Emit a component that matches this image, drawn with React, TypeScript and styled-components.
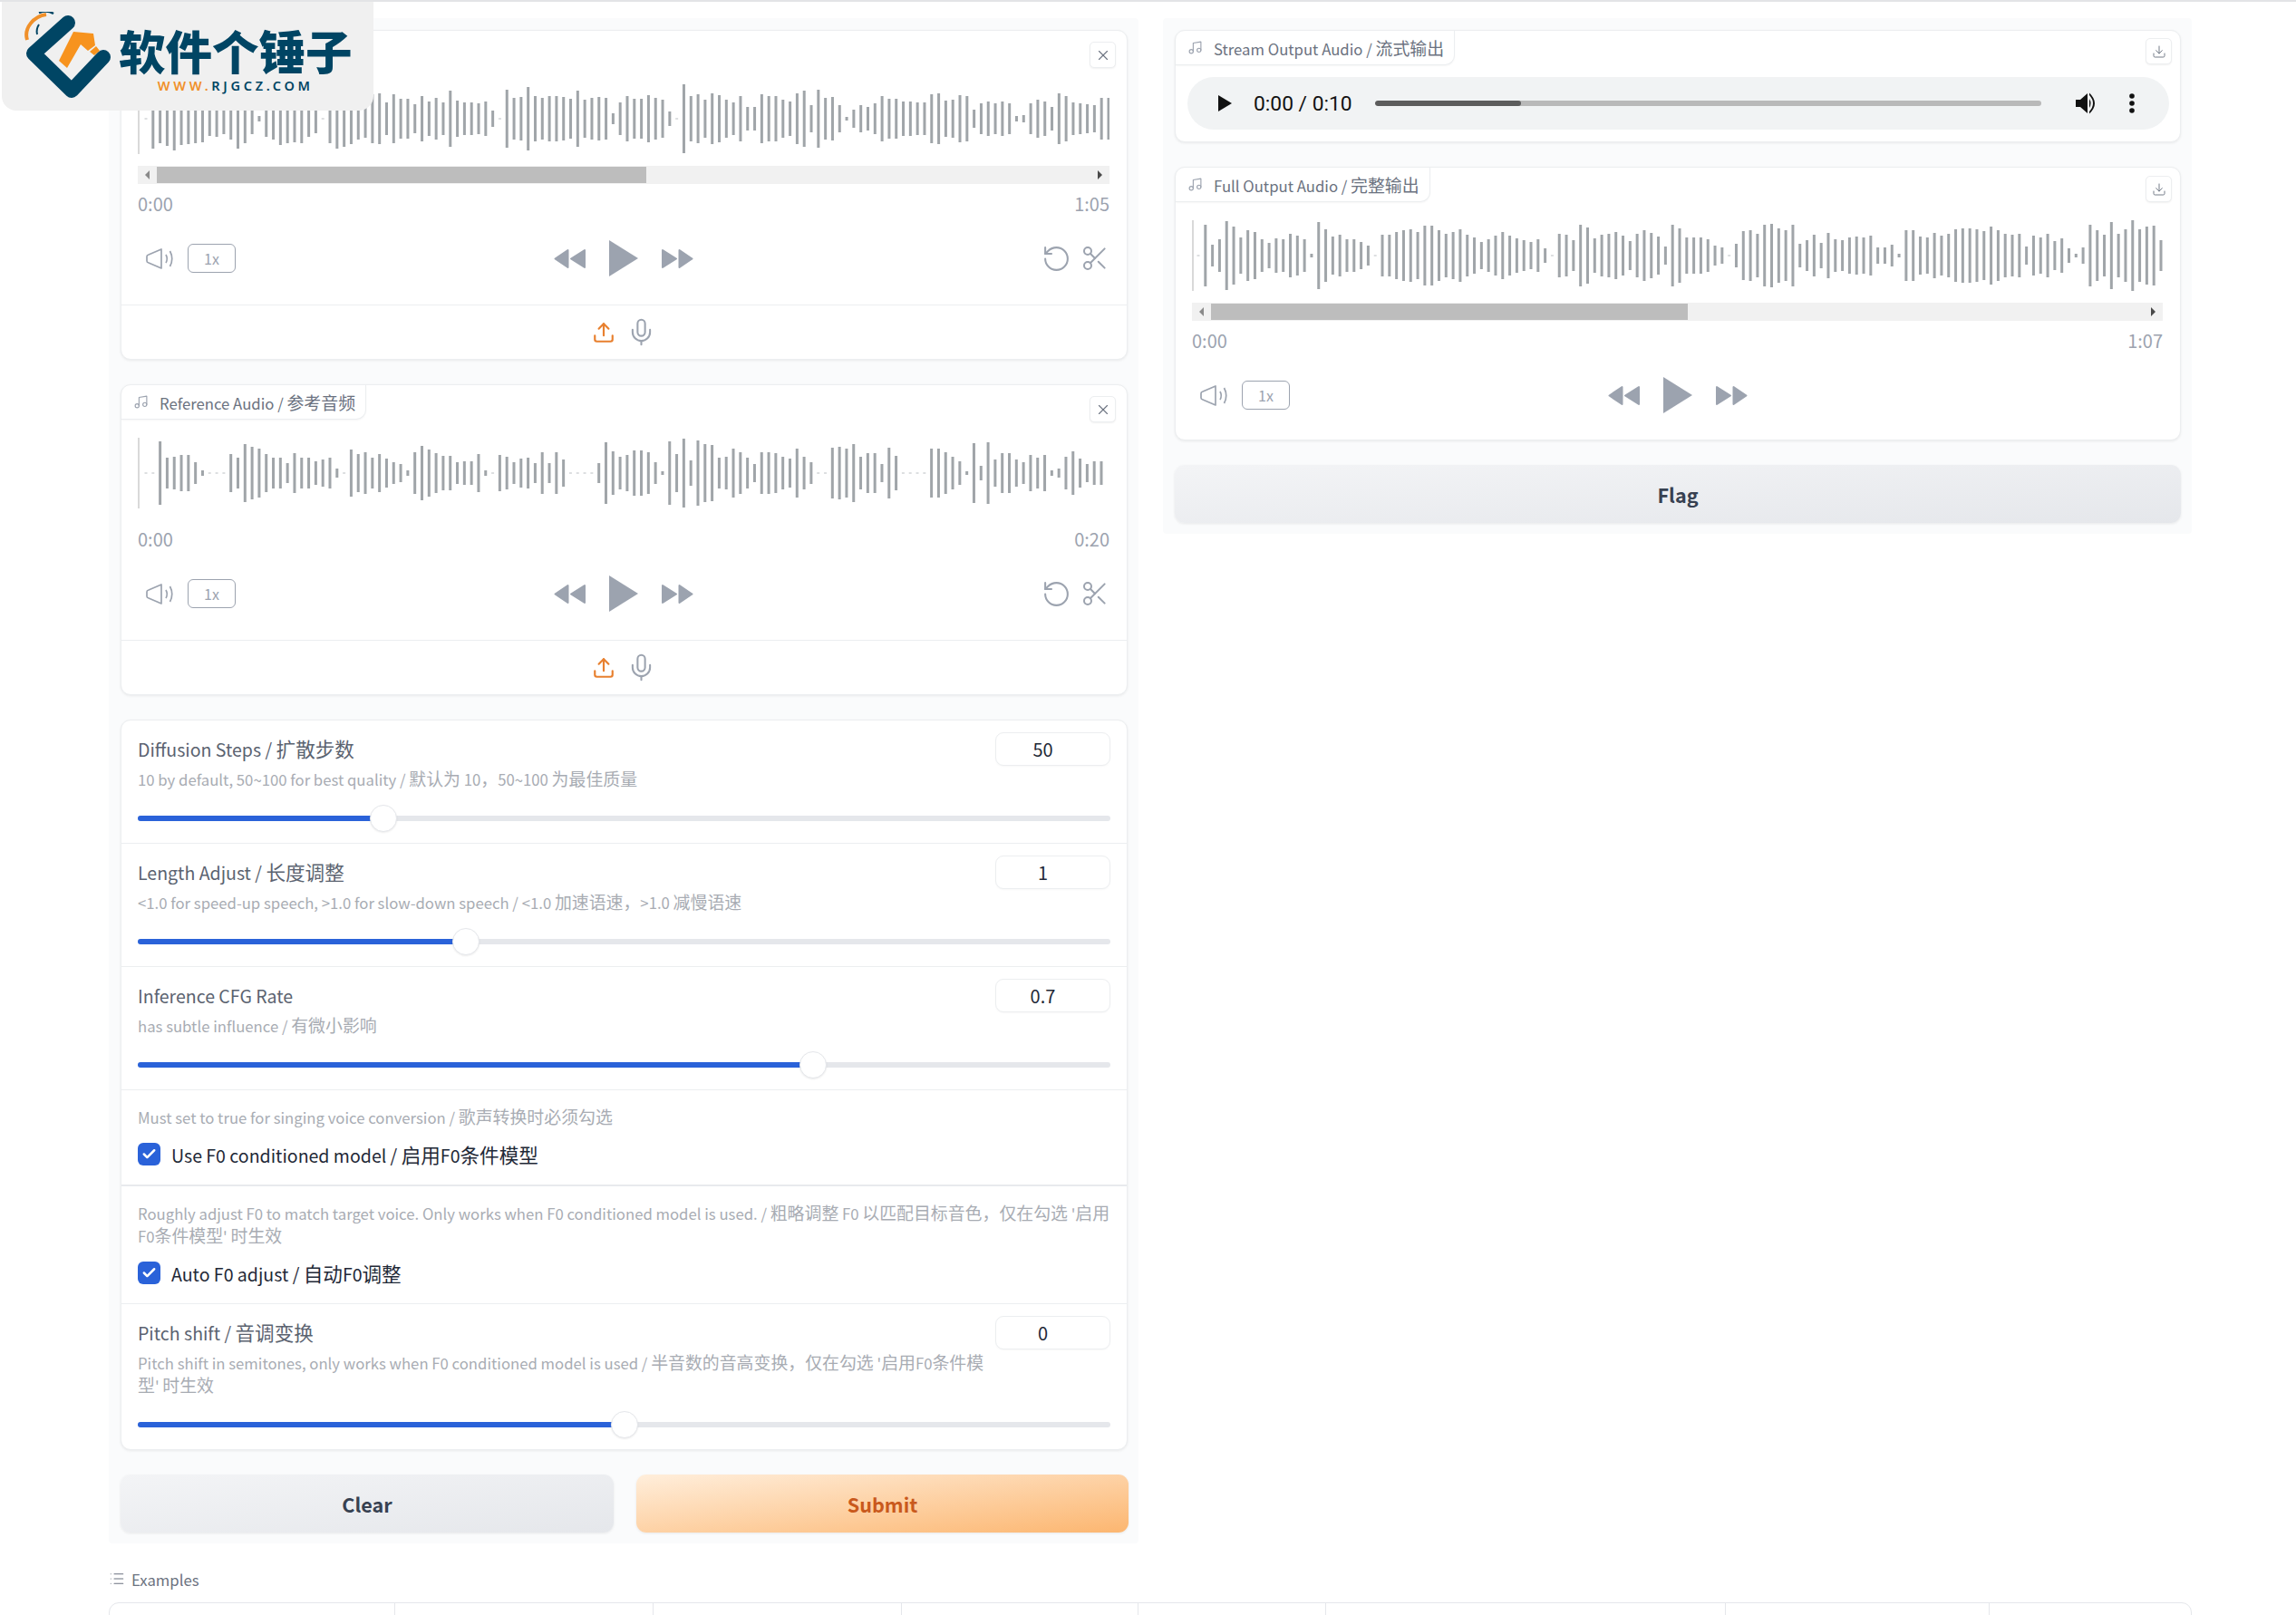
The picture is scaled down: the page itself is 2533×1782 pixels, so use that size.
import React from "react";
import styled, { createGlobalStyle } from "styled-components";
import { Check, Download, List, Mic, Music, RotateCcw, Scissors, Upload, X } from "lucide-react";

const SOURCE_WAVE = [
  1, 33, 27, 30, 35, 29, 28, 27, 26, 19, 20, 17, 23, 33, 27, 17, 3, 20, 23, 29, 27, 26, 27, 20, 16, 1, 27, 33, 31, 28, 23,
  21, 27, 28, 18, 27, 22, 22, 16, 25, 19, 23, 18, 31, 20, 18, 18, 17, 19, 9, 1, 32, 23, 24, 35, 25, 23, 25, 25, 24, 22, 31,
  21, 23, 24, 23, 6, 18, 25, 22, 22, 26, 23, 21, 8, 1, 38, 25, 27, 21, 28, 26, 21, 18, 25, 13, 13, 27, 25, 25, 21, 19, 28,
  31, 15, 32, 23, 24, 15, 2, 10, 15, 13, 17, 25, 22, 22, 19, 19, 18, 18, 27, 28, 20, 21, 26, 25, 10, 17, 19, 17, 19, 17, 3,
  4, 17, 21, 19, 13, 28, 25, 18, 17, 16, 15, 23, 23,
];
const REFERENCE_WAVE = [
  1, 1, 35, 17, 18, 20, 20, 12, 3, 1, 1, 1, 21, 17, 32, 29, 27, 21, 17, 17, 11, 22, 17, 17, 13, 15, 17, 5, 1, 26, 21, 23,
  17, 21, 16, 12, 10, 3, 23, 30, 26, 22, 19, 19, 12, 13, 13, 21, 3, 1, 20, 18, 12, 16, 17, 11, 23, 11, 23, 15, 1, 1, 1, 1,
  11, 34, 24, 18, 20, 25, 25, 23, 12, 2, 35, 21, 38, 14, 36, 32, 31, 17, 18, 27, 23, 17, 10, 23, 23, 22, 18, 16, 27, 18,
  12, 1, 1, 28, 29, 27, 32, 18, 22, 22, 10, 28, 19, 1, 1, 1, 1, 27, 27, 23, 18, 13, 2, 33, 8, 34, 15, 22, 22, 15, 12, 20,
  17, 20, 3, 5, 18, 24, 16, 10, 13, 13,
];
const FULL_WAVE = [
  1, 34, 12, 18, 38, 32, 20, 28, 26, 18, 14, 19, 18, 24, 22, 18, 2, 37, 29, 21, 23, 18, 18, 15, 11, 1, 23, 23, 26, 28, 29,
  26, 33, 33, 28, 24, 26, 29, 23, 20, 15, 18, 22, 26, 22, 19, 17, 15, 18, 8, 1, 24, 23, 17, 34, 31, 19, 23, 24, 26, 22, 16,
  24, 28, 25, 21, 10, 34, 30, 20, 20, 20, 18, 11, 9, 1, 13, 27, 28, 24, 34, 35, 30, 28, 34, 13, 17, 23, 14, 25, 18, 17, 20,
  21, 20, 22, 9, 9, 12, 2, 28, 28, 21, 20, 25, 22, 24, 29, 30, 30, 29, 27, 32, 28, 24, 23, 24, 10, 22, 20, 24, 16, 19, 8,
  2, 9, 34, 28, 23, 37, 24, 29, 39, 29, 32, 33, 17,
];

const GlobalStyle = createGlobalStyle`
  html, body {
    margin: 0;
    height: 1782px;
    overflow: hidden;
    background: #fff;
  }
  body {
    font-family: "Noto Sans CJK SC", "Noto Sans", sans-serif;
    color: #374151;
    border-top: 2px solid #e3e4e6;
    box-sizing: border-box;
  }
  * {
    box-sizing: border-box;
  }
`;

// the latin glyphs of the CJK font run large, so latin runs get a smaller size
const LatinRun = styled.span`
  font-size: 0.885em;
  line-height: 0;
`;

const Page = styled.div`
  position: relative;
  padding: 18px 115px 0 120px;
`;

const LogoBadge = styled.div`
  position: absolute;
  left: 2px;
  top: -2px;
  z-index: 5;
  width: 410px;
  height: 122px;
  display: flex;
  padding: 13px 0 0 25px;
  gap: 9px;
  background: #f0f0f0;
  border-radius: 4px 4px 16px 16px;
`;
const LogoText = styled.div`
  display: flex;
  flex-direction: column;
  align-items: center;
`;
const LogoTitle = styled.div`
  margin-top: 14px;
  font-size: 51.5px;
  line-height: 56px;
  font-weight: 900;
  color: #004564;
  white-space: nowrap;
`;
const LogoUrl = styled.div`
  margin-top: 3px;
  font-family: "Noto Sans", sans-serif;
  font-size: 14.5px;
  line-height: 16px;
  font-weight: 600;
  letter-spacing: 3.7px;
  color: #004564;
  span {
    color: #f0902a;
  }
`;

const Columns = styled.div`
  display: grid;
  grid-template-columns: 1136px 1135px;
  gap: 27px;
  align-items: start;
`;
const Panel = styled.div`
  display: flex;
  flex-direction: column;
  gap: 27px;
  padding: 13px 12px 12px 13px;
  background: #fafbfc;
  border-radius: 4px;
`;

const Card = styled.div`
  background: #fff;
  border: 1px solid #eceef0;
  border-radius: 11px;
  box-shadow: 0 1px 3px rgba(0, 0, 0, 0.07);
`;
const CardHeader = styled.div`
  display: flex;
  justify-content: space-between;
  align-items: flex-start;
  height: 38px;
`;
const LabelTab = styled.div`
  display: flex;
  align-items: center;
  gap: 12px;
  height: 38px;
  padding: 0 11px 0 13px;
  font-size: 18.9px;
  line-height: 25px;
  color: #6b7280;
  border-right: 1px solid #eceef0;
  border-bottom: 1px solid #eceef0;
  border-radius: 11px 0 11px 0;
  box-shadow: 0 1px 2px rgba(0, 0, 0, 0.04);
  white-space: nowrap;
`;
const IconButton = styled.button<{ $top: number; $right: number }>`
  display: flex;
  align-items: center;
  justify-content: center;
  width: 29px;
  height: 29px;
  margin: ${(p) => p.$top}px ${(p) => p.$right}px 0 auto;
  padding: 0;
  background: #fff;
  border: 1px solid #eceef0;
  border-radius: 5px;
  box-shadow: 0 1px 2px rgba(0, 0, 0, 0.06);
  color: #6b7280;
`;

const AudioBody = styled.div`
  padding: 20px 19px 0 18px;
`;
const WaveSvg = styled.svg`
  display: block;
  width: 100%;
  height: 78px;
`;
const ScrollTrack = styled.div`
  display: flex;
  align-items: center;
  height: 20px;
  margin-top: 13px;
  padding: 1px 0;
  background: #f1f1f1;
`;
const ScrollArrow = styled.div<{ $side: "left" | "right" }>`
  flex: none;
  width: 21px;
  display: flex;
  justify-content: center;
  margin-left: ${(p) => (p.$side === "right" ? "auto" : "0")};
  &::before {
    content: "";
    border-top: 5px solid transparent;
    border-bottom: 5px solid transparent;
    border-right: ${(p) => (p.$side === "left" ? "5px solid #8a8a8a" : "0")};
    border-left: ${(p) => (p.$side === "right" ? "5px solid #4a4a4a" : "0")};
  }
`;
const ScrollThumb = styled.div<{ $width: number }>`
  width: ${(p) => p.$width}%;
  height: 100%;
  background: #bdbdbd;
`;
const TimeRow = styled.div<{ $scrolled: boolean }>`
  display: flex;
  justify-content: space-between;
  margin-top: ${(p) => (p.$scrolled ? 11 : 23)}px;
  font-size: 20px;
  line-height: 22px;
  color: #9ca3af;
`;
const Controls = styled.div<{ $tail: number }>`
  display: grid;
  grid-template-columns: 1fr auto 1fr;
  align-items: center;
  height: 40px;
  margin: 29px 0 ${(p) => p.$tail}px;
`;
const ControlGroup = styled.div<{ $end?: boolean; $gap: number; $inset?: number }>`
  display: flex;
  align-items: center;
  gap: ${(p) => p.$gap}px;
  justify-content: ${(p) => (p.$end ? "flex-end" : "flex-start")};
  padding: 0 ${(p) => (p.$end ? p.$inset ?? 0 : 0)}px 0 ${(p) => (p.$end ? 0 : p.$inset ?? 0)}px;
`;
const RateBox = styled.div`
  display: flex;
  align-items: center;
  justify-content: center;
  width: 53px;
  height: 32px;
  border: 1px solid #9ca3af;
  border-radius: 6px;
  font-size: 16px;
  color: #9ca3af;
`;
const ActionRow = styled.div`
  display: flex;
  align-items: center;
  justify-content: center;
  gap: 12px;
  height: 60px;
  border-top: 1px solid #eceef0;
`;

const StreamCard = styled(Card)`
  padding-bottom: 13px;
`;
const Player = styled.div`
  display: flex;
  align-items: center;
  height: 58px;
  margin: 13px 12px 0 13px;
  padding: 0 38px 0 34px;
  background: #f1f3f4;
  border-radius: 29px;
`;
const PlayerTime = styled.div`
  margin-left: 24px;
  font-family: Roboto, sans-serif;
  font-size: 22.8px;
  color: #111;
  white-space: nowrap;
`;
const PlayerTrack = styled.div`
  flex: 1;
  height: 6px;
  margin: 0 38px 0 25px;
  background: #b9b9b9;
  border-radius: 3px;
  overflow: hidden;
`;
const PlayerFill = styled.div<{ $width: number }>`
  width: ${(p) => p.$width}%;
  height: 100%;
  background: #5c5c5c;
  border-radius: 3px;
`;
const PlayerDots = styled.svg`
  margin-left: 35px;
`;

const SettingsCard = styled(Card)`
  display: flex;
  flex-direction: column;
`;
const SettingRow = styled.div<{ $top?: number; $last?: boolean; $thick?: boolean }>`
  padding: ${(p) => p.$top ?? 18}px 18px 12px 18px;
  border-bottom: ${(p) => (p.$last ? "0" : p.$thick ? "2px solid #e8eaed" : "1px solid #eceef0")};
`;
const SettingHead = styled.div`
  display: flex;
  align-items: flex-start;
  gap: 10px;
`;
const SettingText = styled.div`
  flex: 1;
  min-width: 0;
`;
const SettingLabel = styled.div`
  font-size: 21.6px;
  line-height: 26px;
  color: #5b6370;
  white-space: nowrap;
  ${LatinRun} {
    font-size: 0.905em;
  }
`;
const SettingInfo = styled.div<{ $gap?: number }>`
  margin-top: ${(p) => p.$gap ?? 7}px;
  font-size: 18.9px;
  line-height: 25px;
  color: #a8acb3;
`;
const NumberField = styled.input`
  flex: none;
  width: 127px;
  height: 37px;
  margin-top: -5px;
  padding: 0 22px 0 0;
  text-align: center;
  font-family: inherit;
  font-size: 20px;
  color: #1f2937;
  background: #fff;
  border: 1px solid #eceef0;
  border-radius: 9px;
  box-shadow: 0 1px 2px rgba(0, 0, 0, 0.03);
  outline: none;
`;
const SliderWrap = styled.div`
  position: relative;
  height: 30px;
  margin-top: 17px;
`;
const SliderTrack = styled.div`
  position: absolute;
  left: 0;
  right: 0;
  top: 12px;
  height: 6px;
  background: #e5e7eb;
  border-radius: 3px;
`;
const SliderFill = styled.div<{ $pct: number }>`
  position: absolute;
  left: 0;
  top: 12px;
  width: ${(p) => p.$pct}%;
  height: 6px;
  background: #2a62d9;
  border-radius: 3px 0 0 3px;
`;
const SliderThumb = styled.div<{ $pct: number }>`
  position: absolute;
  left: ${(p) => p.$pct}%;
  top: 0;
  width: 30px;
  height: 30px;
  margin-left: -15px;
  background: #fff;
  border: 1px solid #e5e7eb;
  border-radius: 50%;
  box-shadow: 0 1px 2px rgba(0, 0, 0, 0.08);
`;
const CheckRow = styled.div`
  display: flex;
  align-items: center;
  gap: 12px;
  height: 25px;
  margin: 17px 0 9px;
  font-size: 21.6px;
  line-height: 25px;
  color: #1f2937;
  ${LatinRun} {
    font-size: 0.905em;
  }
`;
const CheckBox = styled.div`
  display: flex;
  align-items: center;
  justify-content: center;
  width: 25px;
  height: 25px;
  background: #2a62d9;
  border-radius: 6px;
  color: #fff;
`;

const ButtonRow = styled.div`
  display: grid;
  grid-template-columns: 544px 543px;
  gap: 25px;
`;
const ActionButton = styled.button<{ $primary?: boolean }>`
  height: 64px;
  border: 0;
  border-radius: 11px;
  font-family: inherit;
  font-size: 21.6px;
  font-weight: 600;
  color: ${(p) => (p.$primary ? "#c9591c" : "#374151")};
  background: ${(p) =>
    p.$primary
      ? "linear-gradient(to bottom right, #ffeedb, #fcb670)"
      : "linear-gradient(to bottom right, #f3f4f6, #e5e7eb)"};
  box-shadow: 0 1px 3px rgba(0, 0, 0, 0.08);
`;

const ExamplesLabel = styled.div`
  display: flex;
  align-items: center;
  gap: 7px;
  height: 24px;
  margin-top: 27px;
  font-size: 18.9px;
  line-height: 24px;
  color: #6b7280;
`;
const ExamplesTable = styled.div`
  display: grid;
  grid-template-columns: 315px 285px 274px 261px 207px 441px 291px 224px;
  width: 2298px;
  height: 60px;
  margin-top: 14px;
  border: 1px solid #e5e7eb;
  border-radius: 11px 11px 0 0;
`;
const ExamplesCell = styled.div`
  border-right: 1px solid #e5e7eb;
  &:last-child {
    border-right: 0;
  }
`;

const Mixed = ({ text }: { text: string }) => (
  <span>
    {text.split(/([\x00-\x7F]+)/).map((part, i) => (i % 2 ? <LatinRun key={i}>{part}</LatinRun> : part))}
  </span>
);

function Wave({ data, start, end }: { data: number[]; start: number; end: number }) {
  const step = (end - start) / (data.length - 1);
  return (
    <WaveSvg viewBox="0 0 1072 78" preserveAspectRatio="none">
      <rect x="0" y="0" width="2" height="78" fill="#d9d9d9" />
      {data.map((half, i) => (
        <rect
          key={i}
          x={start + i * step - 1.5}
          y={half <= 1 ? 38.5 : 39 - half}
          width="3"
          height={half <= 1 ? 1 : half * 2}
          fill={half <= 1 ? "#bcc0c4" : "#a0a5a9"}
        />
      ))}
    </WaveSvg>
  );
}

const SpeakerIcon = () => (
  <svg width="31" height="23" viewBox="0 0 31 23" fill="none" stroke="#9ca3af" strokeWidth="1.7">
    <path d="M3 7 L17 1 V22 L3 16 Q1 15.5 1 14 V9 Q1 7.5 3 7 Z" strokeLinejoin="round" />
    <path d="M22 7 Q24.5 11.5 22 16" />
    <path d="M26.5 3 Q31 11.5 26.5 20" />
  </svg>
);
const SkipIcon = ({ flip }: { flip?: boolean }) => (
  <svg
    width="35"
    height="23"
    viewBox="0 0 35 23"
    fill="#9ca3af"
    stroke="#9ca3af"
    strokeWidth="2"
    strokeLinejoin="round"
    transform={flip ? "scale(-1 1)" : undefined}
  >
    <path d="M1.5 11.5 L15.5 2 V21 Z M19 11.5 L34 2 V21 Z" />
  </svg>
);
const PlayIcon = () => (
  <svg width="32" height="40" viewBox="0 0 32 40" fill="#9ca3af">
    <path d="M0 0 L32 20 L0 40 Z" />
  </svg>
);

function AudioControls({ editable, tail }: { editable?: boolean; tail: number }) {
  return (
    <Controls $tail={tail}>
      <ControlGroup $gap={15} $inset={9}>
        <SpeakerIcon />
        <RateBox>1x</RateBox>
      </ControlGroup>
      <ControlGroup $gap={26}>
        <SkipIcon />
        <PlayIcon />
        <SkipIcon flip />
      </ControlGroup>
      <ControlGroup $end $gap={10} $inset={0}>
        {editable && (
          <>
            <RotateCcw size={33} strokeWidth={1.5} color="#9ca3af" />
            <Scissors size={32} strokeWidth={1.5} color="#9ca3af" />
          </>
        )}
      </ControlGroup>
    </Controls>
  );
}

const MusicTab = ({ label }: { label: string }) => (
  <LabelTab>
    <Music size={17} strokeWidth={1.6} color="#9ca3af" />
    <Mixed text={label} />
  </LabelTab>
);

function InputAudio(props: { label?: string; data: number[]; end: number; total: string; thumb?: number }) {
  return (
    <Card>
      <CardHeader>
        {props.label && <MusicTab label={props.label} />}
        <IconButton $top={12} $right={12}>
          <X size={18} strokeWidth={1.5} />
        </IconButton>
      </CardHeader>
      <AudioBody>
        <Wave data={props.data} start={9} end={props.end} />
        {props.thumb && (
          <ScrollTrack>
            <ScrollArrow $side="left" />
            <ScrollThumb $width={props.thumb} />
            <ScrollArrow $side="right" />
          </ScrollTrack>
        )}
        <TimeRow $scrolled={!!props.thumb}>
          <span>0:00</span>
          <span>{props.total}</span>
        </TimeRow>
        <AudioControls editable tail={31} />
      </AudioBody>
      <ActionRow>
        <Upload size={26} strokeWidth={2} color="#e8802f" />
        <Mic size={33} strokeWidth={1.5} color="#9ca3af" />
      </ActionRow>
    </Card>
  );
}

function SliderSetting(props: { label: string; info: string; value: string; pct: number; last?: boolean }) {
  return (
    <SettingRow $last={props.last}>
      <SettingHead>
        <SettingText>
          <SettingLabel>
            <Mixed text={props.label} />
          </SettingLabel>
          <SettingInfo>
            <Mixed text={props.info} />
          </SettingInfo>
        </SettingText>
        <NumberField readOnly value={props.value} />
      </SettingHead>
      <SliderWrap>
        <SliderTrack />
        <SliderFill $pct={props.pct} />
        <SliderThumb $pct={props.pct} />
      </SliderWrap>
    </SettingRow>
  );
}

function CheckSetting(props: { info: string; label: string; thick?: boolean }) {
  return (
    <SettingRow $top={16} $thick={props.thick}>
      <SettingInfo $gap={0}>
        <Mixed text={props.info} />
      </SettingInfo>
      <CheckRow>
        <CheckBox>
          <Check size={17} strokeWidth={3.5} />
        </CheckBox>
        <Mixed text={props.label} />
      </CheckRow>
    </SettingRow>
  );
}

const LogoMark = () => (
  <svg width="95" height="96" viewBox="0 0 95 96" fill="none">
    <path d="M3 31 C-1 18 10 5 24 3" stroke="#f0902a" strokeWidth="4" />
    <path d="M16 1 C21 -1 27 -1 32 2" stroke="#004564" strokeWidth="2.5" />
    <path d="M14 25 C13 21 14 17 16 14" stroke="#004564" strokeWidth="2" />
    <path d="M48 12 L10 46 L52 87 L87 50" stroke="#004564" strokeWidth="16" strokeLinejoin="round" strokeLinecap="round" />
    <path d="M38 54 L54 22 L76 24 L78 37 L70 43 L62 36 L47 62 Z" fill="#f7931e" />
    <path d="M72 44 L79 38 L83 43 L77 48 Z" fill="#f7931e" />
  </svg>
);

export default function App() {
  return (
    <>
      <GlobalStyle />
      <Page>
        <LogoBadge>
          <LogoMark />
          <LogoText>
            <LogoTitle>软件个锤子</LogoTitle>
            <LogoUrl>
              <span>WWW.</span>RJGCZ.COM
            </LogoUrl>
          </LogoText>
        </LogoBadge>
        <Columns>
          <Panel>
            <InputAudio data={SOURCE_WAVE} end={1071} total="1:05" thumb={50.4} />
            <InputAudio label="Reference Audio / 参考音频" data={REFERENCE_WAVE} end={1063} total="0:20" />
            <SettingsCard>
              <SliderSetting
                label="Diffusion Steps / 扩散步数"
                info="10 by default, 50~100 for best quality / 默认为 10，50~100 为最佳质量"
                value="50"
                pct={25.3}
              />
              <SliderSetting
                label="Length Adjust / 长度调整"
                info="<1.0 for speed-up speech, >1.0 for slow-down speech / <1.0 加速语速，>1.0 减慢语速"
                value="1"
                pct={33.7}
              />
              <SliderSetting
                label="Inference CFG Rate"
                info="has subtle influence / 有微小影响"
                value="0.7"
                pct={69.4}
              />
              <CheckSetting
                info="Must set to true for singing voice conversion / 歌声转换时必须勾选"
                label="Use F0 conditioned model / 启用F0条件模型"
                thick
              />
              <CheckSetting
                info="Roughly adjust F0 to match target voice. Only works when F0 conditioned model is used. / 粗略调整 F0 以匹配目标音色，仅在勾选 '启用F0条件模型' 时生效"
                label="Auto F0 adjust / 自动F0调整"
              />
              <SliderSetting
                label="Pitch shift / 音调变换"
                info="Pitch shift in semitones, only works when F0 conditioned model is used / 半音数的音高变换，仅在勾选 '启用F0条件模型' 时生效"
                value="0"
                pct={50}
                last
              />
            </SettingsCard>
            <ButtonRow>
              <ActionButton>Clear</ActionButton>
              <ActionButton $primary>Submit</ActionButton>
            </ButtonRow>
          </Panel>
          <Panel>
            <StreamCard>
              <CardHeader>
                <MusicTab label="Stream Output Audio / 流式输出" />
                <IconButton $top={8} $right={9}>
                  <Download size={16} strokeWidth={1.4} />
                </IconButton>
              </CardHeader>
              <Player>
                <svg width="15" height="18" viewBox="0 0 15 18" fill="#111">
                  <path d="M0 0 L15 9 L0 18 Z" />
                </svg>
                <PlayerTime>0:00 / 0:10</PlayerTime>
                <PlayerTrack>
                  <PlayerFill $width={22} />
                </PlayerTrack>
                <svg width="24" height="24" viewBox="0 0 24 24" fill="#111">
                  <path d="M0 8 H5 L13 1 V23 L5 16 H0 Z" />
                  <path d="M15 7 Q18 12 15 17 Z" />
                  <path d="M15 0.5 Q27 12 15 23.5 L15 21 Q23 12 15 3 Z" />
                </svg>
                <PlayerDots width="6" height="22" viewBox="0 0 6 22" fill="#111">
                  <circle cx="3" cy="3" r="2.8" />
                  <circle cx="3" cy="11" r="2.8" />
                  <circle cx="3" cy="19" r="2.8" />
                </PlayerDots>
              </Player>
            </StreamCard>
            <Card>
              <CardHeader>
                <MusicTab label="Full Output Audio / 完整输出" />
                <IconButton $top={9} $right={9}>
                  <Download size={16} strokeWidth={1.4} />
                </IconButton>
              </CardHeader>
              <AudioBody>
                <Wave data={FULL_WAVE} start={7} end={1070} />
                <ScrollTrack>
                  <ScrollArrow $side="left" />
                  <ScrollThumb $width={49.1} />
                  <ScrollArrow $side="right" />
                </ScrollTrack>
                <TimeRow $scrolled>
                  <span>0:00</span>
                  <span>1:07</span>
                </TimeRow>
                <AudioControls tail={29} />
              </AudioBody>
            </Card>
            <ActionButton>Flag</ActionButton>
          </Panel>
        </Columns>
        <ExamplesLabel>
          <List size={18} strokeWidth={1.4} />
          <Mixed text="Examples" />
        </ExamplesLabel>
        <ExamplesTable>
          {Array.from({ length: 8 }).map((_, i) => (
            <ExamplesCell key={i} />
          ))}
        </ExamplesTable>
      </Page>
    </>
  );
}
